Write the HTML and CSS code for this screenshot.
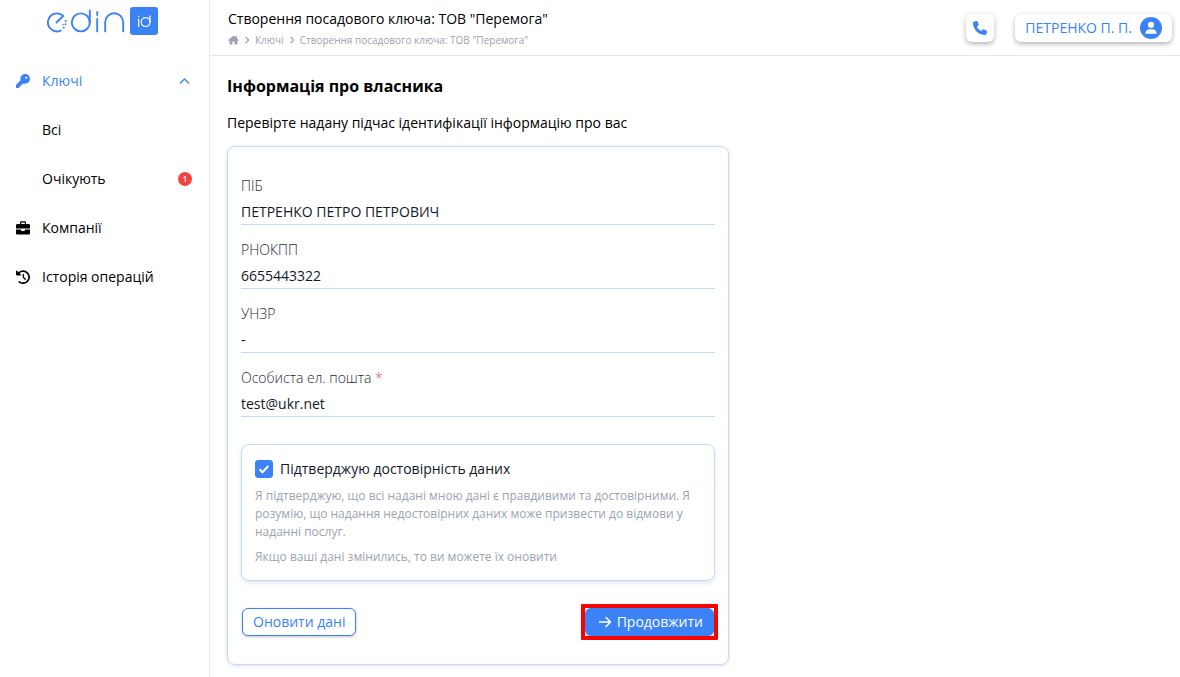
FILE: index.html
```html
<!DOCTYPE html>
<html lang="uk">
<head>
  <meta charset="UTF-8" />
  <meta name="viewport" content="width=device-width, initial-scale=1" />
  <title>Створення посадового ключа</title>
  <link rel="stylesheet" href="styles.css">
</head>
<body>

  <aside class="sidebar">
    <a class="logo" href="#" aria-label="edin id">
      <svg width="112" height="28" viewBox="0 0 112 28" fill="none" stroke="#3b82f6" stroke-width="1.9" stroke-linecap="round">
        <path d="M9.500 15.500 16.200 9A9 9 0 1 0 13.600 23.600" />
        <g fill="#3b82f6" stroke="none">
          <circle cx="18.700" cy="14" r="1" />
          <circle cx="18.500" cy="17.300" r="1" />
          <circle cx="15.900" cy="17.600" r=".8" />
          <circle cx="16.700" cy="20.600" r="1" />
        </g>
        <circle cx="33.800" cy="15.400" r="9" />
        <path d="M42.800 3.500V15.400M50.200 12V24.400M58.200 24.400V15.200a9 9 0 0 1 18 0V24.400" />
        <path d="M50.200 5V8" />
        <rect x="83" y="0" width="28" height="28" rx="3" fill="#3b82f6" stroke="none" />
        <g stroke="#fff" stroke-width="1.200">
          <path d="M91.700 12V19.300M91.700 9V9.400M103 8.800V15.200" />
          <circle cx="98.600" cy="15.100" r="4.400" />
        </g>
      </svg>
    </a>

    <nav class="menu">
      <a class="menu-item active" href="#">
        <svg class="menu-icon" viewBox="0 0 512 512" fill="currentColor"><path d="M336 352c97.200 0 176-78.800 176-176S433.200 0 336 0S160 78.800 160 176c0 18.700 2.900 36.800 8.300 53.700L7 391c-4.500 4.500-7 10.600-7 17v80c0 13.300 10.700 24 24 24h80c13.300 0 24-10.700 24-24v-40h40c13.300 0 24-10.700 24-24v-40h40c6.400 0 12.500-2.500 17-7l33.300-33.300c16.900 5.400 35 8.300 53.700 8.300zM376 96a40 40 0 1 1 0 80a40 40 0 1 1 0-80z" /></svg>
        <span>Ключі</span>
        <svg class="menu-arrow" viewBox="0 0 14 14" fill="none" stroke="currentColor" stroke-width="1.3"><path d="M2 9.500 6.500 5l4.500 4.500" /></svg>
      </a>
      <a class="menu-item sub" href="#"><span>Всі</span></a>
      <a class="menu-item sub" href="#"><span>Очікують</span><b class="badge">1</b></a>
      <a class="menu-item" href="#">
        <svg class="menu-icon" viewBox="0 0 14 14" fill="currentColor"><path fill-rule="evenodd" d="M4 3V1.600C4 .8 4.600.3 5.300.3h3.400c.8 0 1.300.5 1.300 1.300V3h2.700c.7 0 1.300.6 1.300 1.300V7.500H0V4.300C0 3.600.6 3 1.300 3zM5.200 3h3.600V1.500H5.200zM0 8.500h5v.6c0 .5.3.8.8.8h2.400c.5 0 .8-.3.8-.8v-.6h5v3.700c0 .7-.6 1.300-1.300 1.300H1.300C.6 13.500 0 12.900 0 12.200z" /></svg>
        <span>Компанії</span>
      </a>
      <a class="menu-item" href="#">
        <svg class="menu-icon" viewBox="0 0 14 14" fill="none" stroke="currentColor" stroke-width="1.7" stroke-linecap="round" stroke-linejoin="round"><path d="M2 4A6 6 0 1 1 3.300 11.800" /><path fill="currentColor" stroke-width="1" d="M.6 1.200V5H4.400z" /><path stroke-width="1.300" d="M7.300 4.300V7.200L9.200 9.300" /></svg>
        <span>Історія операцій</span>
      </a>
    </nav>
  </aside>

  <div class="page">
    <header class="header">
      <div class="header-title">
        <div class="title">Створення посадового ключа: ТОВ "Перемога"</div>
        <nav class="breadcrumbs">
          <a href="#" aria-label="Головна"><svg width="11" height="10" viewBox="0 0 11 10" fill="currentColor"><path d="M5.500.4 0 5.300.7 6l.9-.7V9.500h2.800V6.600h2.200v2.900h2.800V5.300l.9.700.7-.7L9 3.400V1H7.800v1.300z" /></svg></a>
          <svg width="6" height="8" viewBox="0 0 6 8" fill="none" stroke="currentColor" stroke-width="1.200"><path d="M1.500.8 4.700 4 1.500 7.200" /></svg>
          <a href="#">Ключі</a>
          <svg width="6" height="8" viewBox="0 0 6 8" fill="none" stroke="currentColor" stroke-width="1.200"><path d="M1.500.8 4.700 4 1.500 7.200" /></svg>
          <a href="#">Створення посадового ключа: ТОВ "Перемога"</a>
        </nav>
      </div>
      <button class="head-btn phone" aria-label="Телефон">
        <svg width="14" height="14" viewBox="0 0 512 512" fill="currentColor"><path d="M164.900 24.600c-7.700-18.600-28-28.500-47.400-23.200l-88 24C12.100 30.200 0 46 0 64c0 247.400 200.600 448 448 448c18 0 33.800-12.100 38.600-29.500l24-88c5.300-19.400-4.600-39.700-23.200-47.400l-96-40c-16.300-6.800-35.200-2.100-46.300 11.600L304.700 368C234.300 334.700 177.300 277.700 144 207.300L193.300 167c13.700-11.200 18.400-30 11.600-46.300z" /></svg>
      </button>
      <button class="head-btn user">
        <span>ПЕТРЕНКО П. П.</span>
        <svg width="22" height="22" viewBox="0 0 22 22"><circle cx="11" cy="11" r="11" fill="#3b82f6" /><circle cx="11" cy="7.800" r="3.100" fill="#fff" /><path d="M5.300 16.700c0-3 2.200-4.500 4.200-4.500h3c2 0 4.200 1.500 4.200 4.500z" fill="#fff" /></svg>
      </button>
    </header>

    <main class="content">
      <h1>Інформація про власника</h1>
      <p class="lead">Перевірте надану підчас ідентифікації інформацію про вас</p>

      <form class="card">
        <div class="field">
          <label for="pib">ПІБ</label>
          <input id="pib" type="text" value="ПЕТРЕНКО ПЕТРО ПЕТРОВИЧ" readonly>
        </div>
        <div class="field">
          <label for="rnokpp">РНОКПП</label>
          <input id="rnokpp" type="text" value="6655443322" readonly>
        </div>
        <div class="field">
          <label for="unzr">УНЗР</label>
          <input id="unzr" type="text" value="-" readonly>
        </div>
        <div class="field">
          <label for="email">Особиста ел. пошта <span class="required">*</span></label>
          <input id="email" type="email" value="test@ukr.net">
        </div>

        <div class="confirm">
          <div class="confirm-head">
            <span class="check">
              <input id="confirm" type="checkbox" checked>
              <svg viewBox="0 0 18 18" fill="none" stroke="#fff" stroke-width="2"><path d="M4.500 9.300 7.500 12.200 13.300 6" /></svg>
            </span>
            <label for="confirm">Підтверджую достовірність даних</label>
          </div>
          <p>Я підтверджую, що всі надані мною дані є правдивими та достовірними. Я розумію, що надання недостовірних даних може призвести до відмови у наданні послуг.</p>
          <p>Якщо ваші дані змінились, то ви можете їх оновити</p>
        </div>

        <div class="actions">
          <button type="button" class="btn btn-outline">Оновити дані</button>
          <button type="button" class="btn btn-primary">
            <svg width="14" height="14" viewBox="0 0 14 14" fill="none" stroke="currentColor" stroke-width="1.600" stroke-linecap="round" stroke-linejoin="round"><path d="M1.500 7H12.500M8 2.500 12.500 7 8 11.500" /></svg>
            <span>Продовжити</span>
          </button>
        </div>
      </form>
    </main>
  </div>

</body>
</html>
```
FILE: styles.css
```css
:root {
  --primary: #3b82f6;
  --primary-light: #bfdbfe;
  --gray: #9ca3af;
  --line: #e5e7eb;
  --danger: #ef4444;
}

* {
  box-sizing: border-box;
}

body {
  margin: 0;
  min-height: 100vh;
  display: flex;
  font-family: "Open Sans", "Noto Sans", sans-serif;
  font-size: 14px;
  line-height: 20px;
  color: #000;
  background: #fff;
}

a {
  color: inherit;
  text-decoration: none;
}

button,
input {
  font: inherit;
}

button {
  cursor: pointer;
}

/* Sidebar */
.sidebar {
  flex: 0 0 210px;
  border-right: 1px solid var(--line);
}

.logo {
  display: flex;
  justify-content: center;
  padding: 7px 4px 21px 0;
}

.menu-item {
  display: flex;
  align-items: center;
  gap: 12px;
  height: 49px;
  padding: 0 17px 0 16px;
}

.menu-item.active {
  color: var(--primary);
}

.menu-item.sub {
  padding-left: 42px;
}

.menu-icon,
.menu-arrow {
  width: 14px;
  height: 14px;
}

.menu-arrow {
  margin-left: auto;
}

.badge {
  width: 14px;
  height: 14px;
  margin-left: auto;
  border-radius: 50%;
  background: var(--danger);
  color: #fff;
  font-size: 8px;
  font-weight: 600;
  line-height: 14px;
  text-align: center;
}

/* Header */
.page {
  flex: 1;
  min-width: 0;
}

.header {
  display: flex;
  align-items: center;
  gap: 21px;
  height: 56px;
  padding: 0 8px 0 18px;
  border-bottom: 1px solid var(--line);
}

.header-title {
  flex: 1;
  padding-top: 1px;
}

.breadcrumbs {
  display: flex;
  align-items: center;
  gap: 5px;
  padding-top: 3px;
  font-size: 10px;
  line-height: 16px;
  color: var(--gray);
}

.breadcrumbs a {
  display: flex;
}

.head-btn {
  display: flex;
  align-items: center;
  justify-content: center;
  gap: 8px;
  height: 28px;
  padding: 0 10px;
  border: none;
  border-radius: 6px;
  background: #fff;
  color: var(--primary);
  box-shadow: 0 2px 5px rgba(0, 0, 0, 0.3);
}

.head-btn.phone {
  width: 28px;
  padding: 0;
}

/* Content */
.content {
  padding: 20px 18px 12px 17px;
}

h1 {
  margin: 0 0 17px;
  font-size: 16px;
  font-weight: 700;
  line-height: 20px;
}

.lead {
  margin: 0 0 13px;
}

.card {
  max-width: 502px;
  padding: 26px 13px 28px;
  border: 1px solid var(--primary-light);
  border-radius: 8px;
  box-shadow: 0 1px 4px rgba(0, 0, 0, 0.12);
}

.field {
  margin-bottom: 12px;
}

.field label {
  display: block;
  font-weight: 300;
  line-height: 26px;
  color: #1f2937;
}

.field input {
  display: block;
  width: 100%;
  height: 26px;
  padding: 0;
  border: none;
  border-bottom: 1px solid var(--primary-light);
  outline: none;
  background: none;
  color: #111827;
}

.required {
  color: var(--danger);
}

.confirm {
  margin-top: 27px;
  padding: 14px 13px;
  border: 1px solid var(--primary-light);
  border-radius: 8px;
  box-shadow: 0 2px 4px rgba(0, 0, 0, 0.1);
}

.confirm-head {
  display: flex;
  align-items: center;
  gap: 7px;
  color: #111827;
}

.check {
  position: relative;
  width: 18px;
  height: 18px;
}

.check input {
  appearance: none;
  display: block;
  width: 18px;
  height: 18px;
  margin: 0;
  border: 1px solid var(--primary);
  border-radius: 3px;
}

.check input:checked {
  background: var(--primary);
}

.check svg {
  position: absolute;
  inset: 0;
  pointer-events: none;
}

.confirm p {
  margin: 7px 0 0;
  font-size: 12px;
  line-height: 18px;
  color: var(--gray);
}

.confirm-head + p {
  margin-top: 8px;
}

.actions {
  display: flex;
  justify-content: space-between;
  margin-top: 27px;
  padding: 0 1px;
}

.btn {
  display: flex;
  align-items: center;
  gap: 5px;
  height: 28px;
  padding: 0 10px;
  border: 1px solid var(--primary);
  border-radius: 6px;
  box-shadow: 0 1px 3px rgba(0, 0, 0, 0.25);
}

.btn-outline {
  background: #fff;
  color: var(--primary);
}

.btn-primary {
  position: relative;
  padding-left: 12px;
  background: var(--primary);
  color: #fff;
}

.btn-primary::after {
  content: "";
  position: absolute;
  inset: -5px;
  border: 4px solid #f00;
  border-radius: 1px;
}
```
